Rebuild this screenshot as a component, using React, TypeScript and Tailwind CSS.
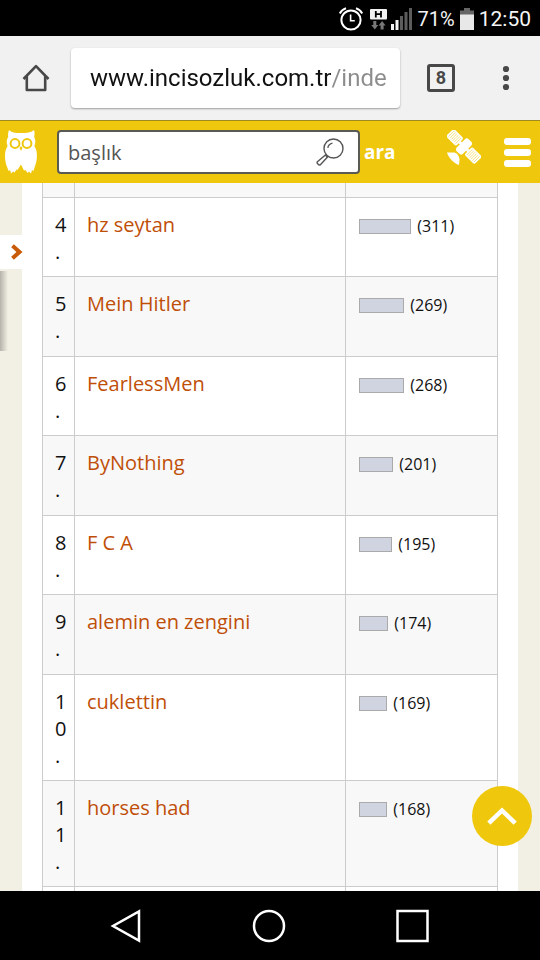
import type { FC } from 'react'

interface Entry {
  rank: number
  name: string
  count: number
}

const ENTRIES: Entry[] = [
  { rank: 4, name: 'hz seytan', count: 311 },
  { rank: 5, name: 'Mein Hitler', count: 269 },
  { rank: 6, name: 'FearlessMen', count: 268 },
  { rank: 7, name: 'ByNothing', count: 201 },
  { rank: 8, name: 'F C A', count: 195 },
  { rank: 9, name: 'alemin en zengini', count: 174 },
  { rank: 10, name: 'cuklettin', count: 169 },
  { rank: 11, name: 'horses had', count: 168 },
]

const StatusBar: FC = () => (
  <div className="flex h-9 shrink-0 items-center justify-end bg-black pt-0.5 pr-[9px] font-[Roboto,sans-serif] text-[#f5f5f5]">
    <svg className="mr-[7px]" width="24" height="24" viewBox="0 0 24 24" fill="none" stroke="#fff" strokeWidth="2">
      <circle cx="12" cy="13" r="9.6" />
      <path d="M11.6 7.5v6.3h4.2" strokeWidth="1.6" />
      <path d="M.8 6.5C2 4 4.2 2.2 7 1.3M23.2 6.5C22 4 19.8 2.2 17 1.3" />
    </svg>
    <svg className="mr-1" width="17" height="21" viewBox="0 0 17 21">
      <rect width="17" height="10.5" rx="1" fill="#f2f2f2" />
      <path d="M5.8 2v6.5M11 2v6.5M5.8 5.2H11" stroke="#000" strokeWidth="1.8" />
      <path d="M3.3 12h3v4h2l-3.5 4.5L1.3 16h2zM10.6 20.5h3v-4h2L12.1 12l-3.500 4.500h2z" fill="#777" />
    </svg>
    <svg className="mr-[6px]" width="21" height="22" viewBox="0 0 21 22">
      <path d="M0 16h3v6H0zM4.5 12h3v10h-3z" fill="#f2f2f2" />
      <path d="M9 8h3v14H9zM13.5 4h3v18h-3zM18 0h3v22h-3z" fill="#5c5c5c" />
    </svg>
    <span className="text-[20px] leading-6">71%</span>
    <svg className="mx-[5px]" width="14" height="22" viewBox="0 0 14 22">
      <path d="M4 0h6v2.5h4V7H0V2.5h4z" fill="#666" />
      <path d="M0 6.5h14V22H0z" fill="#e8e8e8" />
    </svg>
    <span className="text-[21px] leading-6">12:50</span>
  </div>
)

const BrowserBar: FC = () => (
  <div className="flex h-[84px] shrink-0 items-center bg-[#f1f1f1]">
    <button type="button" aria-label="Home" className="flex w-[71px] justify-center">
      <svg width="28" height="28" viewBox="0 0 28 28" fill="none" stroke="#484848" strokeWidth="2.6" strokeLinejoin="round">
        <path d="M1.5 15 14 2.2 26.5 15" />
        <path d="M4.8 12v14h18.4V12" />
      </svg>
    </button>
    <div className="h-[60px] min-w-0 flex-1 rounded-sm bg-white pl-[19px] shadow-[0_1px_2px_rgba(0,0,0,0.35)]">
      <input
        type="text"
        aria-label="Address"
        defaultValue="www.incisozluk.com.tr/inde"
        className="h-full w-full bg-[linear-gradient(90deg,#111_241px,#8c8c8c_241px)] bg-clip-text font-[Roboto,sans-serif] text-[24px] text-transparent outline-none"
      />
    </div>
    <button
      type="button"
      aria-label="Tabs"
      className="ml-[27px] flex size-7 items-center justify-center rounded-[3px] border-3 border-[#484848] font-[Roboto] text-[18px] leading-5 font-bold text-[#484848]"
    >
      8
    </button>
    <button type="button" aria-label="More" className="flex w-[85px] justify-center pl-4">
      <svg width="8" height="26" viewBox="0 0 8 26" fill="#484848">
        <circle cx="4" cy="4" r="3.1" />
        <circle cx="4" cy="13" r="3.1" />
        <circle cx="4" cy="22" r="3.1" />
      </svg>
    </button>
  </div>
)

const Owl: FC = () => (
  <svg width="32" height="44" viewBox="0 0 32 44">
    <path
      d="M4 0c2.500 2.200 5 3 8 3h8c3.200 0 6-.8 9-3 .8 2.600.6 4.600.2 7 1.600 3 1.400 6 .2 9 2 3.400 2.600 6 2.500 10-.1 5-1 8-2.400 11.500L28.500 41l-1.500-1-1 3.500-2-2-1.500 1.500-2-3-1.500.5L16 34.500 12.500 40l-1-.5-2 3L8 41.500 6.200 43.500 5 40l-1.500 1-1.200-3.500C.8 34 .1 31 0 26c0-4 .6-6.600 2.600-10-1.200-3-1.400-6 .6-9C2.800 4.600 3.200 2.600 4 0z"
      fill="#fff"
    />
    <g fill="none" stroke="#efc80e" strokeWidth="2">
      <circle cx="10" cy="13.5" r="4.400" />
      <circle cx="22" cy="13.5" r="4.400" />
    </g>
    <path d="M14.500 17.800 16 16.300l1.500 1.500L16 21z" fill="#efc80e" />
  </svg>
)

const Satellite: FC = () => (
  <svg width="34" height="36" viewBox="0 0 34 36">
    <g transform="rotate(45 17 16.5)" fill="#fff">
      <rect x="-3" y="11" width="14" height="11" rx="2" />
      <rect x="23" y="11" width="14" height="11" rx="2" />
      <rect x="12.5" y="8" width="9" height="17" rx="3" />
      <rect x="9" y="15" width="16" height="3" />
      <g stroke="#efc80e" strokeWidth=".5">
        <path d="M-1 12.500v8M1 12.500v8M3 12.500v8M5 12.500v8M7 12.500v8M9 12.500v8M25 12.500v8M27 12.500v8M29 12.500v8M31 12.500v8M33 12.500v8M35 12.500v8" />
      </g>
    </g>
    <path d="M0 22.500h7.500c3 1 5 4 5 7L12 35C6.500 33 2 28.500 0 22.500z" fill="#fff" />
  </svg>
)

const SiteHeader: FC = () => (
  <header className="flex h-[63px] shrink-0 items-center border-t border-[#a08a20] bg-[#efc80e]">
    <a href="#home" aria-label="inci sözlük" className="pr-5 pl-[5px]">
      <Owl />
    </a>
    <form className="flex min-w-0 flex-1 items-center" onSubmit={(e) => e.preventDefault()}>
      <div className="flex h-11 min-w-0 flex-1 items-center rounded border-2 border-[#5a5a55] bg-white pr-3.5 pl-[9px]">
        <input
          type="text"
          aria-label="başlık"
          placeholder="başlık"
          className="min-w-0 flex-1 pt-0.5 text-[20px] text-[#555] outline-none placeholder:text-[#555]"
        />
        <svg width="28" height="28" viewBox="0 0 28 28" fill="none" stroke="#555" strokeWidth="1.4">
          <circle cx="17.5" cy="10.5" r="9.5" />
          <path d="M11.8 9.8c.5-2.500 2.200-4.200 4.700-4.700" />
          <path d="m10 16.500-8.600 7.200c-1.200 1.200 1.500 4.200 3 3L12 18.500" />
          <path d="m9.300 17 2.200 2.300" />
        </svg>
      </div>
      <button type="submit" className="w-[87px] pl-1 text-left text-[19px] leading-7 font-bold text-white">
        ara
      </button>
    </form>
    <a href="#satellite" aria-label="Uydu" className="-mt-2">
      <Satellite />
    </a>
    <button type="button" aria-label="Menü" className="flex flex-col gap-1 pr-[9px] pl-[23px]">
      <span className="h-[7px] w-[27px] rounded-[3px] bg-white" />
      <span className="h-[7px] w-[27px] rounded-[3px] bg-white" />
      <span className="h-[7px] w-[27px] rounded-[3px] bg-white" />
    </button>
  </header>
)

const cell = 'border border-[#ccc] px-3 align-top'

const RankingTable: FC = () => (
  <table className="w-full table-fixed border-collapse text-[20px] leading-[27px]">
    <colgroup>
      <col className="w-8" />
      <col />
      <col className="w-1/3" />
    </colgroup>
    <tbody>
      <tr aria-hidden="true" className="h-3.5 bg-[#f8f8f8]">
        <td className={`${cell} border-t-0`} />
        <td className={`${cell} border-t-0`} />
        <td className={`${cell} border-t-0`} />
      </tr>
      {ENTRIES.map(({ rank, name, count }) => (
        <tr key={rank} className="h-[79px] odd:h-20 odd:bg-[#f8f8f8]">
          <td className={`${cell} pt-[13px] pb-[11px] break-all text-[#111]`}>
            {rank}
            <br />.
          </td>
          <td className={`${cell} pt-[13px] pb-[11px]`}>
            <a href={`#${rank}`} className="text-[#bf4f08]">
              {name}
            </a>
          </td>
          <td className={`${cell} pt-[13px] pb-[11px]`}>
            <div className="flex h-8 items-center gap-[6px] pl-px text-[16px] text-[#111]">
              <span className="h-[15px] border border-[#aaa] bg-[#d0d4e0]" style={{ width: Math.round(count / 6) }} />
              ({count})
            </div>
          </td>
        </tr>
      ))}
      <tr aria-hidden="true" className="h-20">
        <td className={cell} />
        <td className={cell} />
        <td className={cell} />
      </tr>
    </tbody>
  </table>
)

const NavBar: FC = () => (
  <nav className="flex h-[69px] shrink-0 items-center justify-center gap-[110px] bg-black">
    <button type="button" aria-label="Back">
      <svg width="32" height="34" viewBox="0 0 32 34" fill="none" stroke="#fff" strokeWidth="2.5">
        <path d="M29 2.500v29L3 17z" />
      </svg>
    </button>
    <button type="button" aria-label="Home">
      <svg width="34" height="34" viewBox="0 0 34 34" fill="none" stroke="#fff" strokeWidth="2.5">
        <circle cx="17" cy="17" r="15" />
      </svg>
    </button>
    <button type="button" aria-label="Recents">
      <svg width="34" height="34" viewBox="0 0 34 34" fill="none" stroke="#fff" strokeWidth="2.5">
        <path d="M1.500 2h30v30h-30z" />
      </svg>
    </button>
  </nav>
)

const App: FC = () => (
  <div className="flex h-screen flex-col overflow-hidden font-['Open_Sans',sans-serif]">
    <StatusBar />
    <BrowserBar />
    <SiteHeader />
    <main className="relative min-h-0 flex-1 overflow-hidden bg-[#f2efe4]">
      <div className="mx-[22px] min-h-full bg-white px-5">
        <RankingTable />
      </div>
      <button type="button" aria-label="Aç" className="absolute top-[52px] left-0 flex h-[34px] w-[23px] items-center justify-end bg-white">
        <svg width="12" height="16" viewBox="0 0 12 16" fill="none" stroke="#c85a08" strokeWidth="4">
          <path d="m1.500 1.800 7 6.200-7 6.200" />
        </svg>
      </button>
      <div className="absolute top-[88px] left-0 h-20 w-2 bg-linear-to-r from-black/25 to-transparent" />
      <button
        type="button"
        aria-label="Yukarı"
        className="absolute right-2 bottom-[45px] flex size-[60px] items-center justify-center rounded-full bg-[#efc80e]"
      >
        <svg width="30" height="18" viewBox="0 0 30 18" fill="none" stroke="#fff" strokeWidth="4.5">
          <path d="M1.800 16.200 15 3.500l13.200 12.700" />
        </svg>
      </button>
    </main>
    <NavBar />
  </div>
)

export default App
